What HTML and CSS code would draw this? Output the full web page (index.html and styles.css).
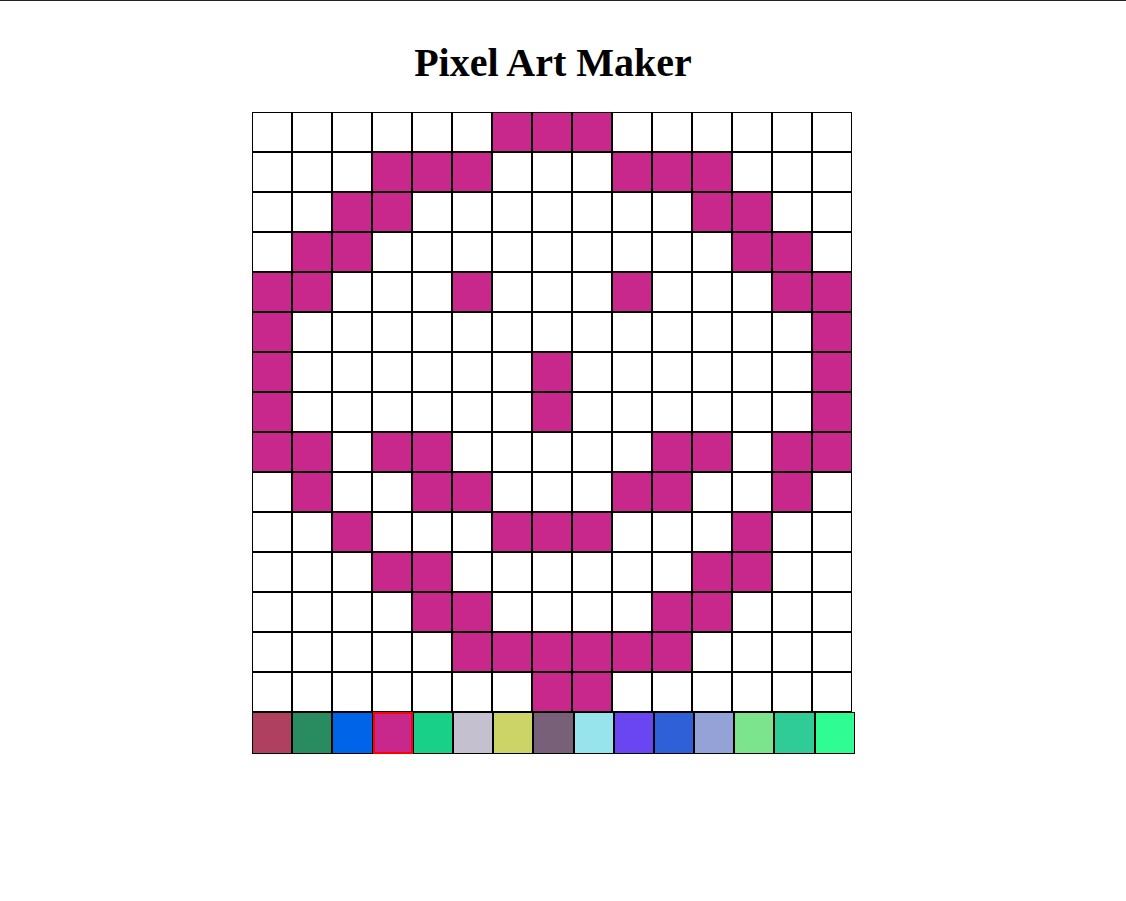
FILE: index.html
```html
<!DOCTYPE html>
<html>
<head>
<meta charset="utf-8">
<title>Pixel Art Maker</title>
<link rel="stylesheet" href="styles.css">
</head>
<body>
<div class="page">
  <h1 class="title">Pixel Art Maker</h1>
  <div class="board">
    <div class="grid">
      <div class="cell"></div><div class="cell"></div><div class="cell"></div><div class="cell"></div><div class="cell"></div><div class="cell"></div><div class="cell on"></div><div class="cell on"></div><div class="cell on"></div><div class="cell"></div><div class="cell"></div><div class="cell"></div><div class="cell"></div><div class="cell"></div><div class="cell"></div>
      <div class="cell"></div><div class="cell"></div><div class="cell"></div><div class="cell on"></div><div class="cell on"></div><div class="cell on"></div><div class="cell"></div><div class="cell"></div><div class="cell"></div><div class="cell on"></div><div class="cell on"></div><div class="cell on"></div><div class="cell"></div><div class="cell"></div><div class="cell"></div>
      <div class="cell"></div><div class="cell"></div><div class="cell on"></div><div class="cell on"></div><div class="cell"></div><div class="cell"></div><div class="cell"></div><div class="cell"></div><div class="cell"></div><div class="cell"></div><div class="cell"></div><div class="cell on"></div><div class="cell on"></div><div class="cell"></div><div class="cell"></div>
      <div class="cell"></div><div class="cell on"></div><div class="cell on"></div><div class="cell"></div><div class="cell"></div><div class="cell"></div><div class="cell"></div><div class="cell"></div><div class="cell"></div><div class="cell"></div><div class="cell"></div><div class="cell"></div><div class="cell on"></div><div class="cell on"></div><div class="cell"></div>
      <div class="cell on"></div><div class="cell on"></div><div class="cell"></div><div class="cell"></div><div class="cell"></div><div class="cell on"></div><div class="cell"></div><div class="cell"></div><div class="cell"></div><div class="cell on"></div><div class="cell"></div><div class="cell"></div><div class="cell"></div><div class="cell on"></div><div class="cell on"></div>
      <div class="cell on"></div><div class="cell"></div><div class="cell"></div><div class="cell"></div><div class="cell"></div><div class="cell"></div><div class="cell"></div><div class="cell"></div><div class="cell"></div><div class="cell"></div><div class="cell"></div><div class="cell"></div><div class="cell"></div><div class="cell"></div><div class="cell on"></div>
      <div class="cell on"></div><div class="cell"></div><div class="cell"></div><div class="cell"></div><div class="cell"></div><div class="cell"></div><div class="cell"></div><div class="cell on"></div><div class="cell"></div><div class="cell"></div><div class="cell"></div><div class="cell"></div><div class="cell"></div><div class="cell"></div><div class="cell on"></div>
      <div class="cell on"></div><div class="cell"></div><div class="cell"></div><div class="cell"></div><div class="cell"></div><div class="cell"></div><div class="cell"></div><div class="cell on"></div><div class="cell"></div><div class="cell"></div><div class="cell"></div><div class="cell"></div><div class="cell"></div><div class="cell"></div><div class="cell on"></div>
      <div class="cell on"></div><div class="cell on"></div><div class="cell"></div><div class="cell on"></div><div class="cell on"></div><div class="cell"></div><div class="cell"></div><div class="cell"></div><div class="cell"></div><div class="cell"></div><div class="cell on"></div><div class="cell on"></div><div class="cell"></div><div class="cell on"></div><div class="cell on"></div>
      <div class="cell"></div><div class="cell on"></div><div class="cell"></div><div class="cell"></div><div class="cell on"></div><div class="cell on"></div><div class="cell"></div><div class="cell"></div><div class="cell"></div><div class="cell on"></div><div class="cell on"></div><div class="cell"></div><div class="cell"></div><div class="cell on"></div><div class="cell"></div>
      <div class="cell"></div><div class="cell"></div><div class="cell on"></div><div class="cell"></div><div class="cell"></div><div class="cell"></div><div class="cell on"></div><div class="cell on"></div><div class="cell on"></div><div class="cell"></div><div class="cell"></div><div class="cell"></div><div class="cell on"></div><div class="cell"></div><div class="cell"></div>
      <div class="cell"></div><div class="cell"></div><div class="cell"></div><div class="cell on"></div><div class="cell on"></div><div class="cell"></div><div class="cell"></div><div class="cell"></div><div class="cell"></div><div class="cell"></div><div class="cell"></div><div class="cell on"></div><div class="cell on"></div><div class="cell"></div><div class="cell"></div>
      <div class="cell"></div><div class="cell"></div><div class="cell"></div><div class="cell"></div><div class="cell on"></div><div class="cell on"></div><div class="cell"></div><div class="cell"></div><div class="cell"></div><div class="cell"></div><div class="cell on"></div><div class="cell on"></div><div class="cell"></div><div class="cell"></div><div class="cell"></div>
      <div class="cell"></div><div class="cell"></div><div class="cell"></div><div class="cell"></div><div class="cell"></div><div class="cell on"></div><div class="cell on"></div><div class="cell on"></div><div class="cell on"></div><div class="cell on"></div><div class="cell on"></div><div class="cell"></div><div class="cell"></div><div class="cell"></div><div class="cell"></div>
      <div class="cell"></div><div class="cell"></div><div class="cell"></div><div class="cell"></div><div class="cell"></div><div class="cell"></div><div class="cell"></div><div class="cell on"></div><div class="cell on"></div><div class="cell"></div><div class="cell"></div><div class="cell"></div><div class="cell"></div><div class="cell"></div><div class="cell"></div>
    </div>
    <div class="palette">
      <div class="swatch c1"></div>
      <div class="swatch c2"></div>
      <div class="swatch c3"></div>
      <div class="swatch c4 selected"></div>
      <div class="swatch c5"></div>
      <div class="swatch c6"></div>
      <div class="swatch c7"></div>
      <div class="swatch c8"></div>
      <div class="swatch c9"></div>
      <div class="swatch c10"></div>
      <div class="swatch c11"></div>
      <div class="swatch c12"></div>
      <div class="swatch c13"></div>
      <div class="swatch c14"></div>
      <div class="swatch c15"></div>
    </div>
  </div>
</div>
</body>
</html>
```

FILE: styles.css
```css
html, body {
  margin: 0;
  padding: 0;
  background: #ffffff;
}

body {
  border-top: 1px solid #222222;
}

.page {
  width: 1104px;
  font-family: "Liberation Serif", "Times New Roman", serif;
}

.title {
  margin: 38px 0 26px;
  padding-left: 2px;
  text-align: center;
  font-size: 40px;
  font-weight: bold;
  color: #000;
}

.board {
  width: 600px;
  margin: 0 auto;
}

.grid {
  display: grid;
  grid-template-columns: repeat(15, 40px);
  grid-auto-rows: 40px;
}

.cell {
  box-sizing: border-box;
  border: 1px solid #000;
  background: #ffffff;
}

.cell.on {
  background: #c8288c;
}

.palette {
  display: flex;
  width: 603px;
}

.swatch {
  box-sizing: border-box;
  flex: 0 0 40.2px;
  height: 42px;
  border: 1px solid #000;
}

.swatch.selected {
  border: 2px solid #ff0000;
}

.c1 { background: #b04060; }
.c2 { background: #288c60; }
.c3 { background: #0064e8; }
.c4 { background: #c8288c; }
.c5 { background: #18d088; }
.c6 { background: #c4c0d0; }
.c7 { background: #ccd468; }
.c8 { background: #786078; }
.c9 { background: #98e4ec; }
.c10 { background: #6a46f2; }
.c11 { background: #3060d8; }
.c12 { background: #94a2d8; }
.c13 { background: #7ce48c; }
.c14 { background: #30cc98; }
.c15 { background: #30fc94; }
```
